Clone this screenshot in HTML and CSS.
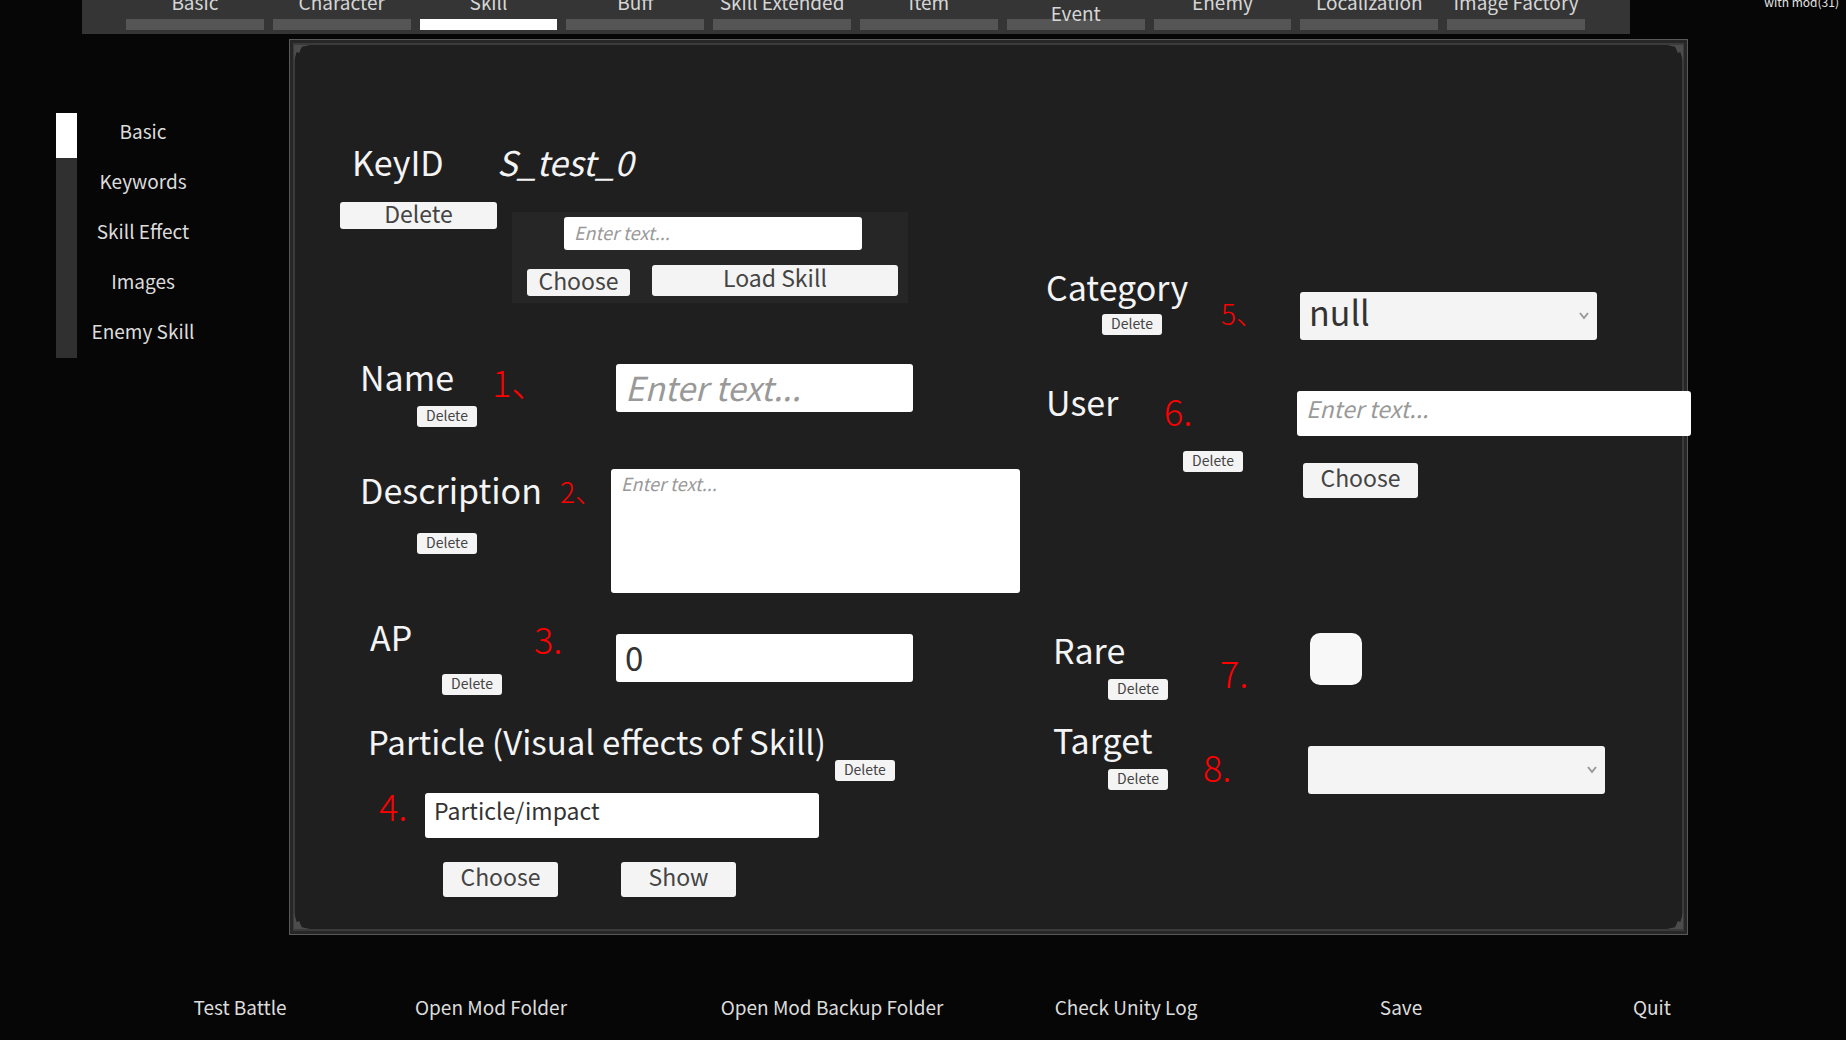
FILE: index.html
```html
<!DOCTYPE html>
<html lang="en">
<head>
<meta charset="utf-8">
<title>Skill Editor</title>
<link rel="stylesheet" href="styles.css">
</head>
<body>
<header class="top">
  <nav class="tabs" aria-label="Sections">
    <button class="tab"><span class="tab-label">Basic</span><span class="tab-bar"></span></button>
    <button class="tab"><span class="tab-label">Character</span><span class="tab-bar"></span></button>
    <button class="tab active"><span class="tab-label">Skill</span><span class="tab-bar"></span></button>
    <button class="tab"><span class="tab-label">Buff</span><span class="tab-bar"></span></button>
    <button class="tab"><span class="tab-label">Skill Extended</span><span class="tab-bar"></span></button>
    <button class="tab"><span class="tab-label">Item</span><span class="tab-bar"></span></button>
    <button class="tab low"><span class="tab-label">Event</span><span class="tab-bar"></span></button>
    <button class="tab"><span class="tab-label">Enemy</span><span class="tab-bar"></span></button>
    <button class="tab"><span class="tab-label">Localization</span><span class="tab-bar"></span></button>
    <button class="tab"><span class="tab-label">Image Factory</span><span class="tab-bar"></span></button>
  </nav>
  <p class="version">with mod(31)</p>
</header>

<div class="body">
  <nav class="side" aria-label="Skill pages">
    <div class="track"><div class="thumb"></div></div>
    <div class="side-list">
      <button class="link">Basic</button>
      <button class="link">Keywords</button>
      <button class="link">Skill Effect</button>
      <button class="link">Images</button>
      <button class="link">Enemy Skill</button>
    </div>
  </nav>

  <main class="panel">
    <svg class="corner tl" viewBox="0 0 18 18" aria-hidden="true"><path d="M0 0H18L9 2L7 6L6 9L3 8L0 18Z"/></svg>
    <svg class="corner tr" viewBox="0 0 18 18" aria-hidden="true"><path d="M0 0H18L9 2L7 6L6 9L3 8L0 18Z"/></svg>
    <svg class="corner bl" viewBox="0 0 18 18" aria-hidden="true"><path d="M0 0H18L9 2L7 6L6 9L3 8L0 18Z"/></svg>
    <svg class="corner br" viewBox="0 0 18 18" aria-hidden="true"><path d="M0 0H18L9 2L7 6L6 9L3 8L0 18Z"/></svg>

    <div class="col left">
      <section class="key">
        <div class="key-side">
          <h1 class="title key-title">KeyID</h1>
          <button class="btn wide">Delete</button>
        </div>
        <div class="key-main">
          <p class="title key-value">S_test_0</p>
          <div class="loader">
            <input class="input search" type="text" placeholder="Enter text..." aria-label="Skill to load">
            <div class="loader-row">
              <button class="btn pick">Choose</button>
              <button class="btn load">Load Skill</button>
            </div>
          </div>
        </div>
      </section>

      <section class="field name">
        <div class="caption">
          <label class="title" for="name">Name</label>
          <button class="btn small">Delete</button>
        </div>
        <input class="input large" id="name" type="text" placeholder="Enter text...">
        <span class="note">1、</span>
      </section>

      <section class="field description">
        <div class="caption">
          <label class="title" for="description">Description</label>
          <button class="btn small">Delete</button>
        </div>
        <textarea class="input area" id="description" placeholder="Enter text..."></textarea>
        <span class="note">2、</span>
      </section>

      <section class="field ap">
        <div class="caption">
          <label class="title" for="ap">AP</label>
          <button class="btn small">Delete</button>
        </div>
        <input class="input large" id="ap" type="text" value="0">
        <span class="note">3.</span>
      </section>

      <section class="particle">
        <div class="particle-head">
          <label class="title" for="particle">Particle (Visual effects of Skill)</label>
          <button class="btn small">Delete</button>
        </div>
        <input class="input medium" id="particle" type="text" value="Particle/impact">
        <div class="particle-actions">
          <button class="btn">Choose</button>
          <button class="btn">Show</button>
        </div>
        <span class="note">4.</span>
      </section>
    </div>

    <div class="col right">
      <section class="field category">
        <div class="caption">
          <label class="title" for="category">Category</label>
          <button class="btn small">Delete</button>
        </div>
        <div class="drop">
          <select class="select" id="category"><option>null</option></select>
          <svg class="chevron" viewBox="0 0 12 8" aria-hidden="true"><path d="M2 1L6 6L10 1"/></svg>
        </div>
        <span class="note">5、</span>
      </section>

      <section class="field user">
        <div class="caption">
          <label class="title" for="user">User</label>
          <button class="btn small">Delete</button>
        </div>
        <div class="user-control">
          <input class="input medium" id="user" type="text" placeholder="Enter text...">
          <button class="btn">Choose</button>
        </div>
        <span class="note">6.</span>
      </section>

      <section class="field rare">
        <div class="caption">
          <label class="title" for="rare">Rare</label>
          <button class="btn small">Delete</button>
        </div>
        <input class="check" id="rare" type="checkbox">
        <span class="note">7.</span>
      </section>

      <section class="field target">
        <div class="caption">
          <label class="title" for="target">Target</label>
          <button class="btn small">Delete</button>
        </div>
        <div class="drop">
          <select class="select" id="target"><option></option></select>
          <svg class="chevron" viewBox="0 0 12 8" aria-hidden="true"><path d="M2 1L6 6L10 1"/></svg>
        </div>
        <span class="note">8.</span>
      </section>
    </div>
  </main>
</div>

<footer class="footer">
  <button class="link">Test Battle</button>
  <button class="link">Open Mod Folder</button>
  <button class="link">Open Mod Backup Folder</button>
  <button class="link">Check Unity Log</button>
  <button class="link">Save</button>
  <button class="link">Quit</button>
</footer>
</body>
</html>
```
FILE: styles.css
```css
* {
  box-sizing: border-box;
}

body {
  margin: 0;
  min-height: 100vh;
  overflow-x: hidden;
  background: #060606;
  color: #e4e4e4;
  font-family: "Noto Sans CJK SC", "Noto Sans", sans-serif;
  font-size: 19px;
  line-height: 30px;
}

button,
input,
select,
textarea {
  margin: 0;
  border: 0;
  font: inherit;
}

h1,
p {
  margin: 0;
}

/* Top tabs */
.top {
  display: flex;
  height: 34px;
  overflow: hidden;
}

.tabs {
  flex: 1;
  display: grid;
  grid-template-columns: repeat(10, minmax(0, 1fr));
  align-content: end;
  gap: 9px;
  height: 34px;
  margin-left: 82px;
  padding: 0 45px 4px 44px;
  background: #353535;
}

.tab {
  display: flex;
  flex-direction: column;
  padding: 0;
  background: none;
  color: #d6d6d6;
  white-space: nowrap;
}

.tab-label {
  position: relative;
  align-self: center;
  margin-bottom: 2px;
}

.tab-bar {
  width: 100%;
  height: 11px;
  background: #555;
}

.active .tab-bar {
  background: #fff;
}

.low .tab-label {
  margin-top: 11px;
  margin-bottom: -9px;
}

.version {
  width: 216px;
  margin-top: -6px;
  padding-right: 7px;
  font-size: 12px;
  line-height: 16px;
  text-align: right;
}

/* Side navigation */
.body {
  display: flex;
  align-items: flex-start;
  margin-top: 5px;
}

.side {
  flex: none;
  display: flex;
  gap: 10px;
  width: 289px;
  padding: 74px 0 0 56px;
}

.track {
  width: 21px;
  height: 245px;
  background: #303030;
}

.thumb {
  height: 45px;
  background: #fff;
}

.side-list {
  display: flex;
  flex-direction: column;
  gap: 20px;
  width: 112px;
  padding-top: 3px;
}

.link {
  padding: 0;
  background: none;
  color: #dcdcdc;
  white-space: nowrap;
}

/* Editor panel */
.panel {
  position: relative;
  flex: 1;
  display: grid;
  grid-template-columns: 705fr 642fr;
  margin-right: 158px;
  padding: 101px 0 37px 50px;
  border: 1px solid #595959;
  background: #1f1f20;
  box-shadow: inset 0 0 0 3px #272727, inset 0 0 0 5px #3b3b3b;
}

.corner {
  position: absolute;
  width: 16px;
  height: 16px;
  fill: #4c4c4c;
}

.tl {
  top: 5px;
  left: 4px;
}

.tr {
  top: 5px;
  right: 4px;
  transform: scaleX(-1);
}

.bl {
  bottom: 5px;
  left: 4px;
  transform: scaleY(-1);
}

.br {
  right: 4px;
  bottom: 5px;
  transform: scale(-1);
}

.col {
  min-width: 0;
}

.title {
  display: block;
  color: #f4f4f4;
  font-size: 34px;
  font-weight: 400;
  line-height: 42px;
  white-space: nowrap;
}

.btn {
  width: 115px;
  height: 35px;
  padding: 0 0 6px;
  border-radius: 3px;
  background: #f4f4f4;
  color: #444;
  font-size: 23px;
  line-height: 23px;
  white-space: nowrap;
}

.btn.small {
  display: block;
  width: 60px;
  height: 21px;
  padding-bottom: 3px;
  font-size: 14px;
  line-height: 16px;
}

.btn.wide {
  width: 157px;
  height: 27px;
}

.btn.pick {
  width: 103px;
  height: 27px;
}

.btn.load {
  width: 246px;
  height: 31px;
}

.input {
  display: block;
  padding: 0 10px;
  border-radius: 3px;
  background: #fff;
  color: #333;
}

.input::placeholder {
  color: #999;
  font-style: italic;
  opacity: 1;
}

.search {
  width: 298px;
  height: 33px;
  padding-bottom: 3px;
  font-size: 18px;
}

.large {
  width: 297px;
  height: 48px;
  padding: 0 9px 2px;
  font-size: 33px;
}

.medium {
  width: 394px;
  height: 45px;
  padding: 0 9px 11px;
  font-size: 23px;
}

.area {
  width: 409px;
  height: 124px;
  padding-top: 0;
  font-size: 18px;
  line-height: 28px;
  resize: none;
}

.note {
  position: absolute;
  color: #f00;
  font-size: 36px;
  font-weight: 300;
  line-height: 1;
}

/* Key block */
.key {
  display: flex;
  gap: 15px;
  height: 215px;
}

.key-side {
  width: 157px;
}

.key-title {
  padding-left: 12px;
  margin-bottom: 17px;
}

.key-value {
  margin-left: -15px;
  font-style: italic;
}

.loader {
  width: 396px;
  height: 91px;
  margin-top: 29px;
  padding: 5px 10px 7px 15px;
  background: #262626;
}

.loader .search {
  margin-left: 37px;
}

.loader-row {
  display: flex;
  align-items: flex-end;
  justify-content: space-between;
  margin-top: 15px;
}

/* Fields */
.field {
  position: relative;
  display: flex;
  align-items: flex-start;
}

.left .caption {
  flex: none;
  width: 276px;
}

.right .caption {
  flex: none;
  width: 252px;
}

.name {
  height: 113px;
}

.name .title,
.description .title {
  padding-left: 20px;
}

.name .small {
  margin: 8px 0 0 77px;
}

.name .input {
  margin-top: 8px;
}

.name .note {
  top: 7px;
  left: 152px;
}

.description {
  height: 147px;
}

.description .caption {
  width: 271px;
}

.description .small {
  margin: 22px 0 0 77px;
}

.description .note {
  top: 8px;
  left: 220px;
  font-size: 28px;
}

.ap {
  height: 104px;
}

.ap .title {
  padding-left: 30px;
}

.ap .small {
  margin: 16px 0 0 102px;
}

.ap .input {
  margin-top: 18px;
}

.ap .note {
  top: 4px;
  left: 194px;
}

.particle {
  position: relative;
  padding-left: 28px;
}

.particle-head {
  display: flex;
  gap: 9px;
}

.particle-head .title {
  font-size: 33px;
}

.particle-head .small {
  margin-top: 40px;
}

.particle .input {
  margin: 12px 0 0 57px;
}

.particle-actions {
  display: flex;
  gap: 63px;
  margin: 24px 0 0 75px;
}

.particle .note {
  top: 67px;
  left: 39px;
}

/* Right column */
.right {
  padding-top: 125px;
}

.drop {
  display: grid;
  align-items: center;
}

.select {
  grid-area: 1 / 1;
  width: 297px;
  height: 48px;
  padding: 0 9px 8px;
  border-radius: 3px;
  background: #f4f4f4;
  color: #333;
  font-size: 34px;
  line-height: 40px;
  appearance: none;
}

.chevron {
  grid-area: 1 / 1;
  justify-self: end;
  width: 12px;
  height: 8px;
  margin-right: 7px;
  fill: none;
  stroke: #999;
  stroke-width: 2;
  pointer-events: none;
}

.category {
  height: 115px;
}

.category .title,
.user .title {
  padding-left: 1px;
}

.category .small {
  margin: 6px 0 0 57px;
}

.category .drop {
  margin: 26px 0 0 3px;
}

.category .note {
  top: 33px;
  left: 176px;
  font-size: 28px;
}

.user {
  height: 248px;
}

.user .small {
  margin: 28px 0 0 138px;
}

.user-control {
  padding-top: 10px;
}

.user-control .btn {
  margin: 27px 0 0 6px;
}

.user .note {
  top: 11px;
  left: 119px;
}

.rare {
  height: 90px;
}

.rare .title,
.target .title {
  padding-left: 8px;
}

.rare .small,
.target .small {
  margin: 8px 0 0 63px;
}

.check {
  width: 52px;
  height: 52px;
  margin: 4px 0 0 13px;
  border-radius: 10px;
  background: #f8f8f8;
  appearance: none;
}

.check:checked {
  background: #9ab8e8;
}

.rare .note {
  top: 25px;
  left: 175px;
}

.target .drop {
  margin: 27px 0 0 11px;
}

.target .note {
  top: 29px;
  left: 158px;
}

/* Bottom actions */
.footer {
  display: grid;
  grid-template-columns: 224fr 278fr 404fr 184fr 366fr 136fr;
  margin: 57px 126px 0 128px;
  padding-bottom: 10px;
}
```
